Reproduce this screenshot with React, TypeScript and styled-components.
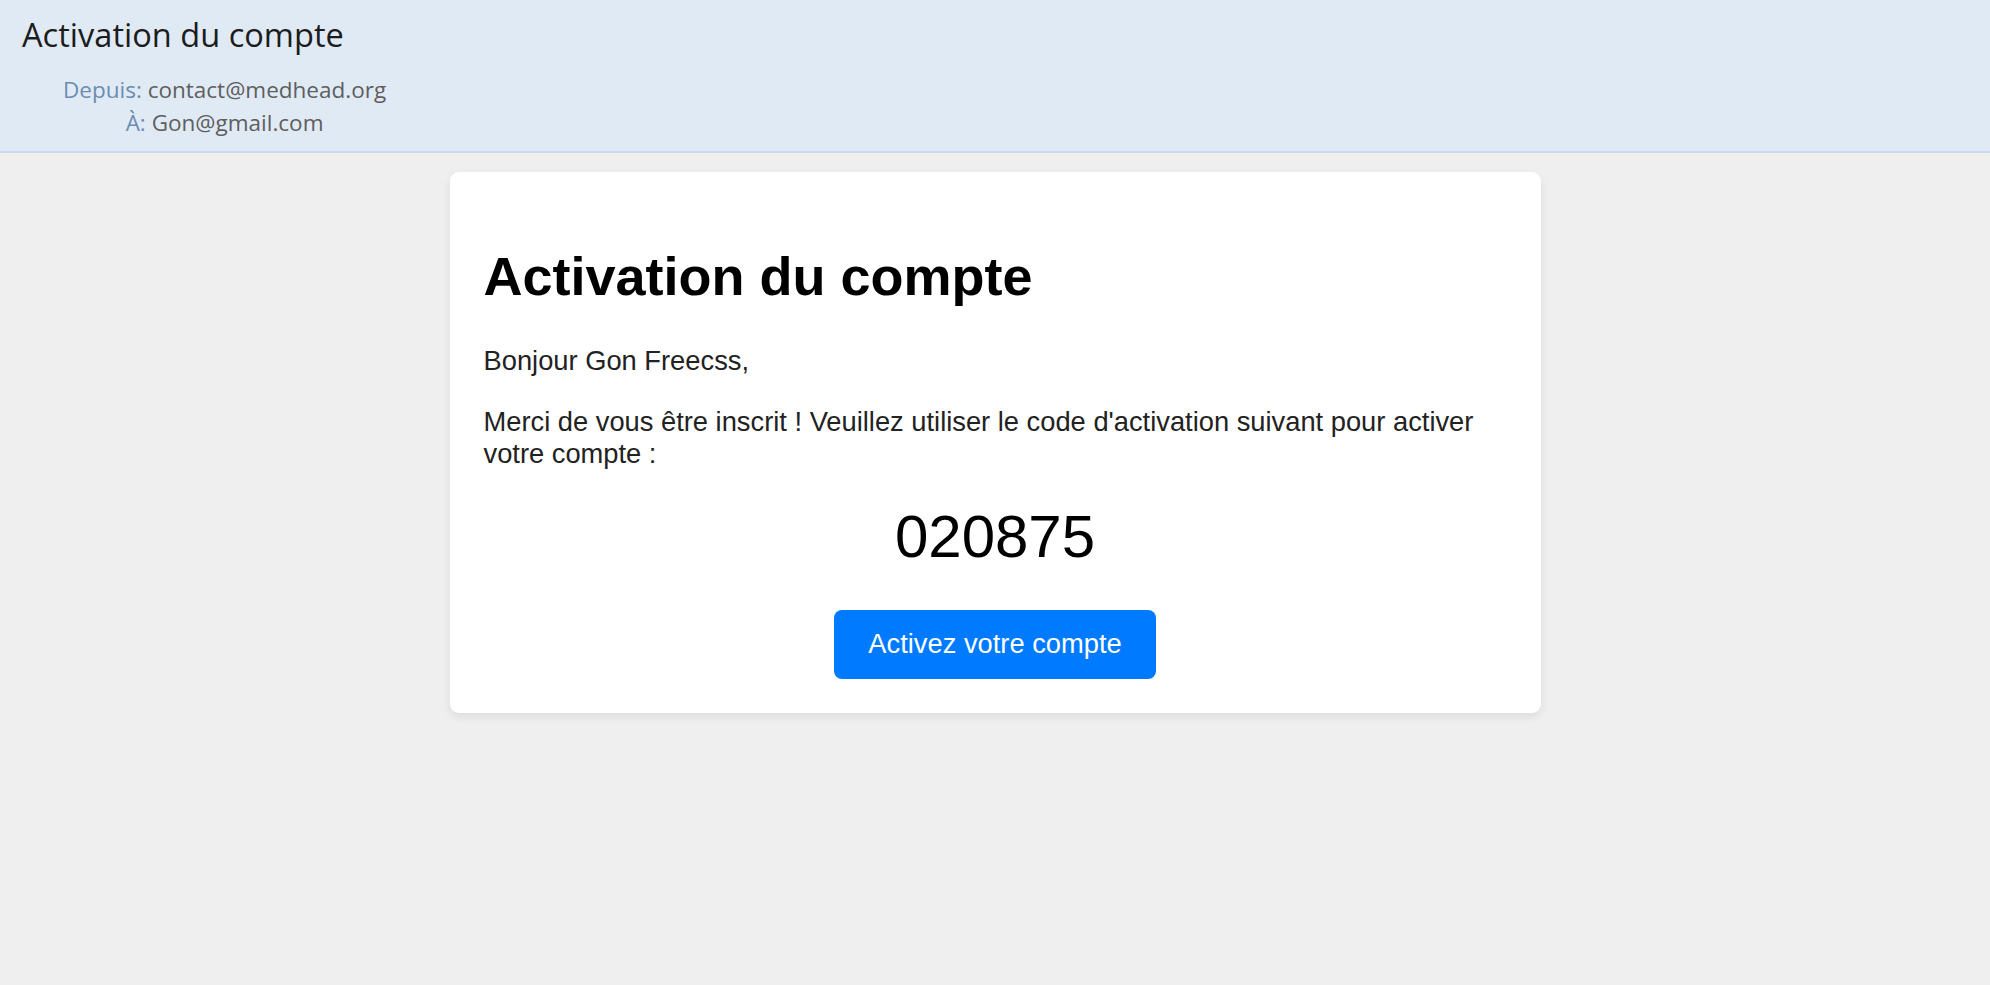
import styled, { createGlobalStyle } from 'styled-components';

const GlobalStyle = createGlobalStyle`
  html, body {
    margin: 0;
    padding: 0;
    background: #efefef;
  }
  body {
    font-family: 'Liberation Sans', Arial, sans-serif;
    min-height: 985px;
  }
`;

const mail = {
  subject: 'Activation du compte',
  from: 'contact@medhead.org',
  to: 'Gon@gmail.com',
  name: 'Gon Freecss',
  code: '020875',
};

const App = () => {
  return (
    <>
      <GlobalStyle />
      <MailHeader>
        <Subject>{mail.subject}</Subject>
        <Meta>
          <MetaLine>
            <span className="label">Depuis:</span> {mail.from}
          </MetaLine>
          <MetaLine>
            <span className="label">À:</span> {mail.to}
          </MetaLine>
        </Meta>
      </MailHeader>
      <MailBody>
        <Card>
          <Title>Activation du compte</Title>
          <Text>Bonjour {mail.name},</Text>
          <Text>
            Merci de vous être inscrit ! Veuillez utiliser le code d'activation
            suivant pour activer votre compte :
          </Text>
          <Code>{mail.code}</Code>
          <Actions>
            <ActivateButton type="button">Activez votre compte</ActivateButton>
          </Actions>
        </Card>
      </MailBody>
    </>
  );
};

const MailHeader = styled.header`
  background: #e0eaf5;
  border-bottom: 2px solid #cbdaea;
  padding: 15px 22px 12px;
  height: 153px;
  box-sizing: border-box;
  font-family: 'Open Sans', 'Noto Sans', sans-serif;
`;

const Subject = styled.div`
  font-size: 32.6px;
  line-height: 40px;
  color: #1c1c1c;
`;

const Meta = styled.div`
  display: inline-block;
  margin: 18px 0 0 41px;
  text-align: center;
`;

const MetaLine = styled.div`
  font-size: 22.5px;
  line-height: 33px;
  color: #5e5e5e;
  .label {
    color: #6b8db0;
  }
`;

const MailBody = styled.main`
  display: flex;
  justify-content: center;
  padding-top: 19px;
`;

const Card = styled.div`
  width: 1091px;
  box-sizing: border-box;
  background: #fff;
  border-radius: 9px;
  padding: 34px;
  box-shadow: 0 4px 10px rgba(0, 0, 0, 0.08);
`;

const Title = styled.h1`
  margin: 39px 0 38px;
  font-size: 54px;
  line-height: 62px;
  font-weight: 700;
  color: #000;
`;

const Text = styled.p`
  margin: 0 0 29px;
  font-size: 27.3px;
  line-height: 32px;
  color: #222;
`;

const Code = styled.div`
  margin-top: 32px;
  text-align: center;
  font-size: 60px;
  line-height: 70px;
  color: #000;
`;

const Actions = styled.div`
  display: flex;
  justify-content: center;
  margin-top: 38px;
`;

const ActivateButton = styled.button`
  border: none;
  background: #007bff;
  color: #fff;
  font-family: 'Liberation Sans', Arial, sans-serif;
  font-size: 27.3px;
  line-height: 32px;
  padding: 18px 34px 19px;
  border-radius: 8px;
  cursor: pointer;
`;

export default App;
